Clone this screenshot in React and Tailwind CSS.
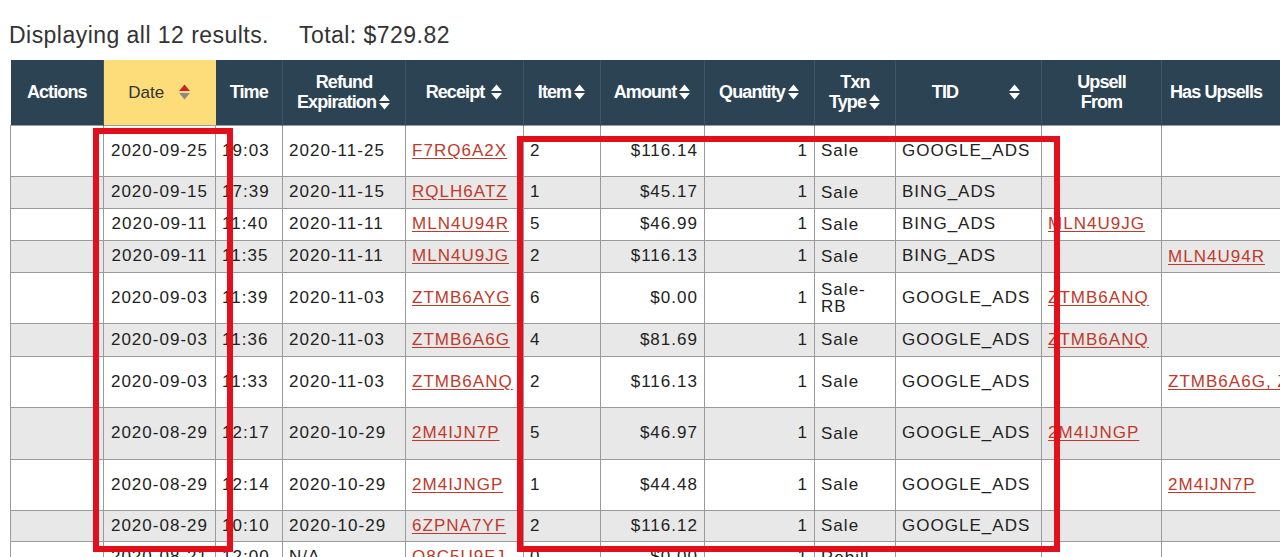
import React from "react";

const cols = [93, 112, 67, 123, 118, 77, 104, 110, 81, 146, 120, 130];

const rows = [
  { h: 51, bg: "bg-white", d: "2020-09-25", t: "19:03", r: "2020-11-25", rc: "F7RQ6A2X", i: "2", a: "$116.14", tx: "Sale", tid: "GOOGLE_ADS", uf: "", hu: "" },
  { h: 32, bg: "bg-[#e8e8e8]", d: "2020-09-15", t: "17:39", r: "2020-11-15", rc: "RQLH6ATZ", i: "1", a: "$45.17", tx: "Sale", tid: "BING_ADS", uf: "", hu: "" },
  { h: 32, bg: "bg-white", d: "2020-09-11", t: "11:40", r: "2020-11-11", rc: "MLN4U94R", i: "5", a: "$46.99", tx: "Sale", tid: "BING_ADS", uf: "MLN4U9JG", hu: "" },
  { h: 32, bg: "bg-[#e8e8e8]", d: "2020-09-11", t: "11:35", r: "2020-11-11", rc: "MLN4U9JG", i: "2", a: "$116.13", tx: "Sale", tid: "BING_ADS", uf: "", hu: "MLN4U94R" },
  { h: 51, bg: "bg-white", d: "2020-09-03", t: "11:39", r: "2020-11-03", rc: "ZTMB6AYG", i: "6", a: "$0.00", tx: "Sale-RB", tid: "GOOGLE_ADS", uf: "ZTMB6ANQ", hu: "" },
  { h: 33, bg: "bg-[#e8e8e8]", d: "2020-09-03", t: "11:36", r: "2020-11-03", rc: "ZTMB6A6G", i: "4", a: "$81.69", tx: "Sale", tid: "GOOGLE_ADS", uf: "ZTMB6ANQ", hu: "" },
  { h: 51, bg: "bg-white", d: "2020-09-03", t: "11:33", r: "2020-11-03", rc: "ZTMB6ANQ", i: "2", a: "$116.13", tx: "Sale", tid: "GOOGLE_ADS", uf: "", hu: "ZTMB6A6G, ZTMB6AYG" },
  { h: 52, bg: "bg-[#e8e8e8]", d: "2020-08-29", t: "12:17", r: "2020-10-29", rc: "2M4IJN7P", i: "5", a: "$46.97", tx: "Sale", tid: "GOOGLE_ADS", uf: "2M4IJNGP", hu: "" },
  { h: 51, bg: "bg-white", d: "2020-08-29", t: "12:14", r: "2020-10-29", rc: "2M4IJNGP", i: "1", a: "$44.48", tx: "Sale", tid: "GOOGLE_ADS", uf: "", hu: "2M4IJN7P" },
  { h: 31, bg: "bg-[#e8e8e8]", d: "2020-08-29", t: "10:10", r: "2020-10-29", rc: "6ZPNA7YF", i: "2", a: "$116.12", tx: "Sale", tid: "GOOGLE_ADS", uf: "", hu: "" },
  { h: 32, bg: "bg-white", d: "2020-08-21", t: "12:00", r: "N/A", rc: "Q8C5U9FJ", i: "0", a: "$0.00", tx: "Rebill", tid: "", uf: "", hu: "" },
];

const Sort = ({ active }) => (
  <svg width="13" height="18" viewBox="0 0 12 16" className="inline-block ml-[2px] shrink-0">
    <path d="M6 1 L11 7 H1 Z" fill={active ? "#d0202a" : "#ffffff"} />
    <path d="M6 15 L11 9 H1 Z" fill={active ? "#8a8a8a" : "#ffffff"} />
  </svg>
);

const Link = ({ children }) => (
  <span className="text-[#c0392b] underline underline-offset-2">{children}</span>
);

export default function App() {
  const th = "border-r border-[#3d5566] text-white font-bold text-[18px] leading-[20px] tracking-[-0.05em] align-middle whitespace-nowrap";
  const td = "border border-[#9a9a9a] px-[6px] align-middle text-[17px] tracking-[0.06em] text-[#222] whitespace-nowrap";
  return (
    <div className="relative w-[1280px] h-[557px] overflow-hidden bg-white" style={{ fontFamily: "'Liberation Sans', Arial, sans-serif" }}>
      <div className="pl-[9px] pt-[18px] h-[60px] text-[23px] tracking-[0.02em] text-[#333]">
        Displaying all 12 results.<span className="ml-[30px]">Total: $729.82</span>
      </div>
      <table className="ml-[10px] table-fixed border-collapse" style={{ width: cols.reduce((a, b) => a + b, 0) }}>
        <colgroup>
          {cols.map((w, i) => <col key={i} style={{ width: w }} />)}
        </colgroup>
        <thead>
          <tr className="h-[65px] bg-[#2c4354]">
            <th className={th}>Actions</th>
            <th className="bg-[#fddd7a] text-[#333] font-normal text-[17px] align-middle">
              <div className="flex items-center justify-center gap-3">Date<Sort active /></div>
            </th>
            <th className={th}>Time</th>
            <th className={th}>
              <div>Refund</div>
              <div className="flex items-center justify-center">Expiration<Sort /></div>
            </th>
            <th className={th}><div className="flex items-center justify-center gap-1">Receipt<Sort /></div></th>
            <th className={th}><div className="flex items-center justify-center">Item<Sort /></div></th>
            <th className={th}><div className="flex items-center justify-center">Amount<Sort /></div></th>
            <th className={th}><div className="flex items-center justify-center">Quantity<Sort /></div></th>
            <th className={th}>
              <div>Txn</div>
              <div className="flex items-center justify-center">Type<Sort /></div>
            </th>
            <th className={th}><div className="flex items-center justify-center gap-12 pl-4">TID<Sort /></div></th>
            <th className={th}><div>Upsell</div><div>From</div></th>
            <th className={th + " text-left pl-2"}>Has Upsells</th>
          </tr>
        </thead>
        <tbody>
          {rows.map((r, k) => (
            <tr key={k} className={r.bg} style={{ height: r.h }}>
              <td className={td}></td>
              <td className={td + " text-center"}>{r.d}</td>
              <td className={td + " overflow-hidden"}>{r.t}</td>
              <td className={td}>{r.r}</td>
              <td className={td}><Link>{r.rc}</Link></td>
              <td className={td}>{r.i}</td>
              <td className={td + " text-right"}>{r.a}</td>
              <td className={td + " text-right"}>1</td>
              <td className={td + " leading-[17px]"}>{r.tx === "Sale-RB" ? <>Sale-<br />RB</> : r.tx}</td>
              <td className={td}>{r.tid}</td>
              <td className={td + " overflow-hidden"}><Link>{r.uf}</Link></td>
              <td className={td + " leading-[19px] whitespace-normal"}><Link>{r.hu}</Link></td>
            </tr>
          ))}
        </tbody>
      </table>
      <div className="absolute left-[93px] top-[128px] w-[140px] h-[424px] border-[6px] border-[#e3101b]" />
      <div className="absolute left-[517px] top-[136px] w-[543px] h-[416px] border-[6px] border-[#e3101b]" />
    </div>
  );
}
